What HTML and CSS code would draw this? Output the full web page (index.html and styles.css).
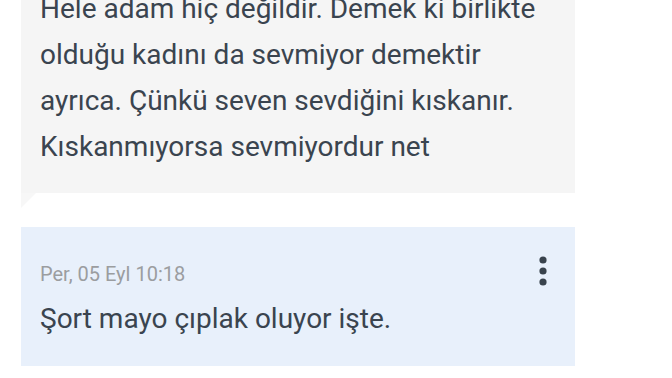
FILE: index.html
```html
<!DOCTYPE html>
<html>
	<head>
		<meta charset="utf-8" />
		<title>Mesajlar</title>
		<link rel="stylesheet" href="styles.css">
	</head>
	<body>
		<div class="thread">
			<div class="bubble bubble-in">
				<p class="text">Hele adam hiç değildir. Demek ki birlikte olduğu kadını da sevmiyor demektir ayrıca. Çünkü seven sevdiğini kıskanır. Kıskanmıyorsa sevmiyordur net</p>
			</div>
			<div class="bubble bubble-out">
				<div class="head">
					<span class="time">Per, 05 Eyl 10:18</span>
					<a class="more" href="javascript:;">
						<svg width="8" height="30" viewBox="0 0 8 30">
							<circle cx="4" cy="4" r="3.6" fill="#39434d"/>
							<circle cx="4" cy="15" r="3.6" fill="#39434d"/>
							<circle cx="4" cy="26" r="3.6" fill="#39434d"/>
						</svg>
					</a>
				</div>
				<p class="text">Şort mayo çıplak oluyor işte.</p>
			</div>
		</div>
	</body>
</html>
```

FILE: styles.css
```css
body,p{
	margin: 0;
	padding: 0;
}
body{
	background: #fff;
	font-family: Roboto, "Noto Sans", sans-serif;
	overflow: hidden;
}
a{
	text-decoration: none;
}
.thread{
	width: 554px;
	margin: -14px 0 0 21px;
	display: flex;
	flex-direction: column;
	gap: 34px;
}
.bubble{
	position: relative;
	padding: 0 19px 23px 19px;
}
.bubble::after{
	content: '';
	position: absolute;
	left: 0;
	top: 100%;
	border-top: 15px solid transparent;
	border-right: 15px solid transparent;
}
.bubble-in{
	background: #f5f5f5;
}
.bubble-in::after{
	border-top-color: #f7f7f7;
}
.bubble-out{
	background: #e8f0fb;
	padding-top: 25px;
	padding-bottom: 24px;
}
.bubble-out::after{
	border-top-color: #ebf2fb;
}
.text{
	font-size: 28px;
	line-height: 46px;
	color: #3a444f;
}
.head{
	display: flex;
	justify-content: space-between;
	align-items: center;
	padding-right: 9px;
	height: 44px;
}
.time{
	font-size: 20px;
	color: #9b9da0;
}
.more{
	display: flex;
	margin-top: -6px;
}
```
